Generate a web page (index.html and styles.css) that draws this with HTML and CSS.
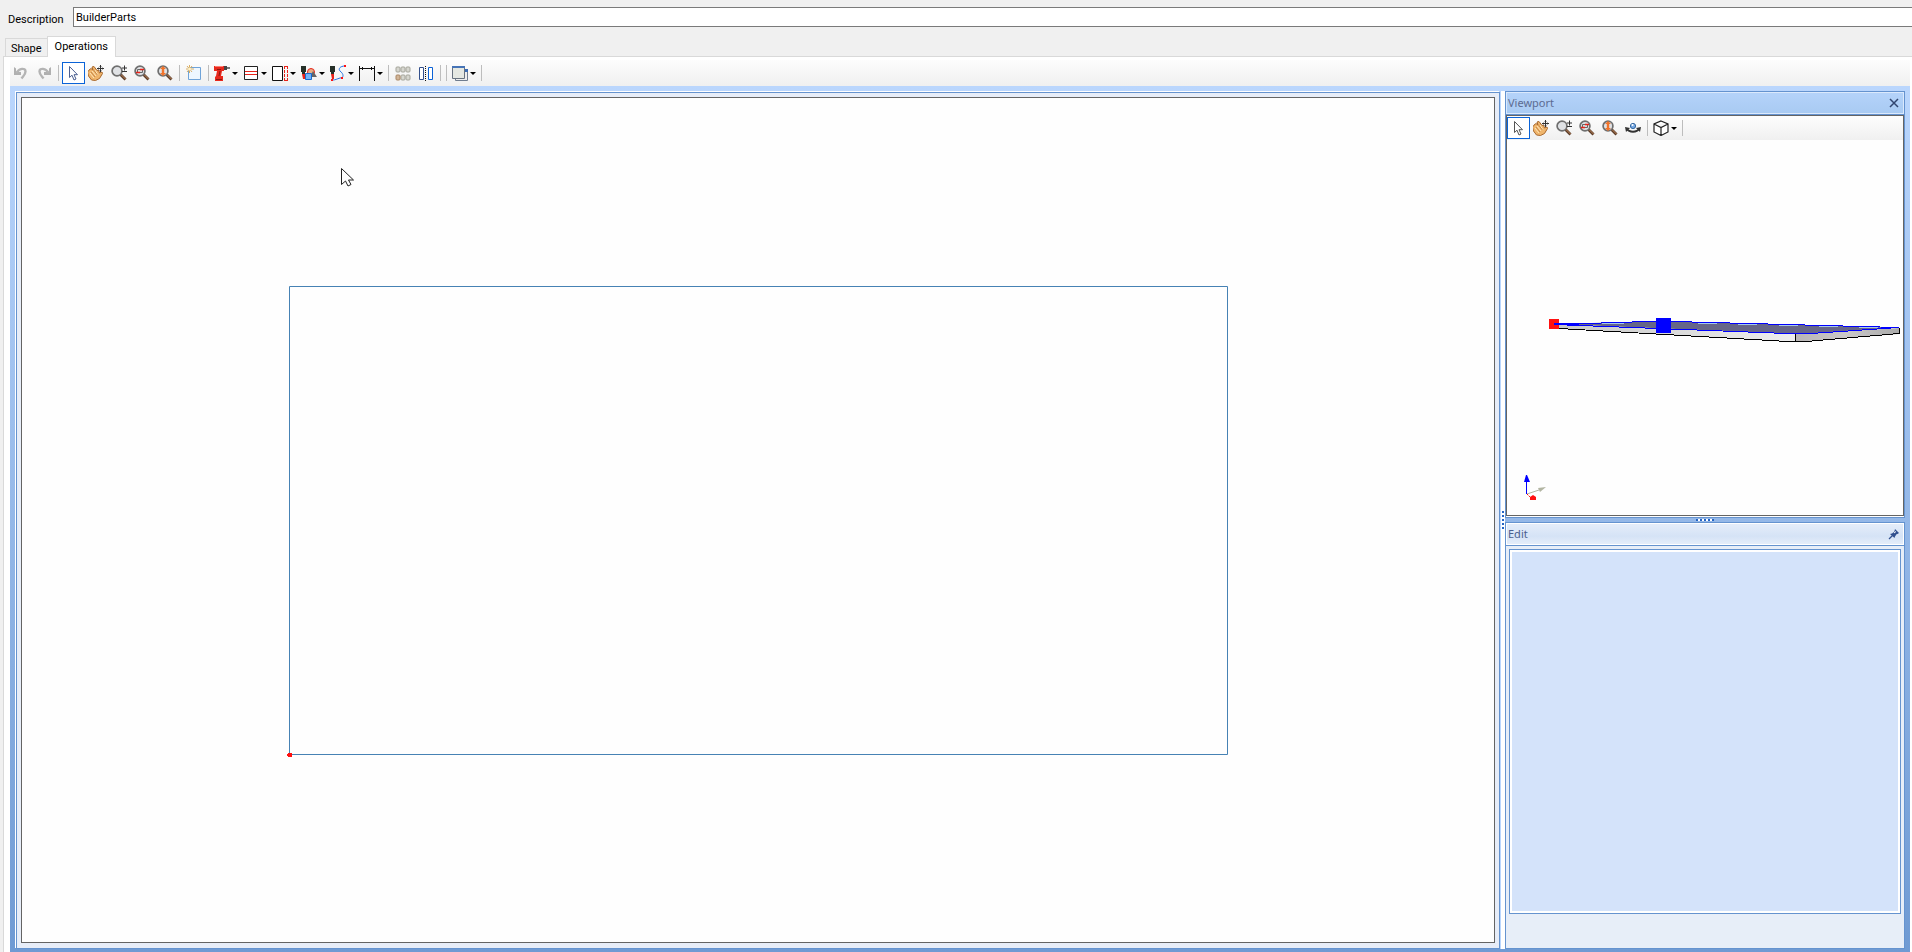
FILE: index.html
```html
<!DOCTYPE html>
<html lang="en">

<head>
    <meta charset="UTF-8">
    <meta name="viewport" content="width=device-width, initial-scale=1.0">
    <title>BuilderParts</title>
    <link rel="stylesheet" href="styles.css">
</head>

<body>
    <!-- shared icons -->
    <svg class="sprite" xmlns="http://www.w3.org/2000/svg">
        <symbol id="i-arrow" viewBox="0 0 16 16">
            <path d="M4.500 1.500v11l2.500-2.300 2 4.800 2-1-2-4.300h3.500z" fill="#fff" stroke="currentColor" />
        </symbol>
        <symbol id="i-hand" viewBox="0 0 16 16">
            <path d="M1 5l2-1.500 2 1.500-1-3 2-.5 3 4 1.500-.5 1 3 2.500-1 .5 1.500-3 5-4 2-4-.5-3-4-1-4 1-1z" fill="#efb56c" stroke="#a9682c" />
            <path d="M2 8l4 5M4 6l4 5M7 5l3 5" stroke="#ffe6b8" fill="none" />
            <path d="M3 7l4 5M5.500 5l4 5" stroke="#a9682c" stroke-width=".6" />
            <path d="M12.500 0v7M9 3.500h7" stroke="#333" />
            <path d="M11.500 1.500h2M11.500 5.500h2M10.500 2.500v2M14.500 2.500v2" stroke="#333" stroke-width=".7" />
        </symbol>
        <symbol id="i-glass" viewBox="0 0 16 16">
            <path d="M9.500 9.500l5 5" stroke="#5b3b27" stroke-width="2.800" />
            <path d="M10 9.500l4.500 4.500" stroke="#c08a60" />
            <circle cx="6" cy="6" r="4.900" fill="#e0e2e5" stroke="#6f6f6f" stroke-width="1.700" />
        </symbol>
        <symbol id="i-zoom" viewBox="0 0 16 16">
            <use href="#i-glass" />
            <path d="M11 3h5M13.500 .5v5M11 6.500h5" stroke="#333" />
        </symbol>
        <symbol id="i-zoomwin" viewBox="0 0 16 16">
            <use href="#i-glass" />
            <path d="M3.500 4.500h5v3h-5z" fill="#ddd" stroke="#666" />
            <path d="M6 4.500h4M2 7.500h4" stroke="#e8231a" stroke-width="1.500" />
        </symbol>
        <symbol id="i-zoomfit" viewBox="0 0 16 16">
            <use href="#i-glass" />
            <path d="M6 1l3 3H7.200v4H9l-3 3-3-3h1.800V4H3z" fill="#f2742b" />
        </symbol>
    </svg>

    <header class="description">
        <label for="desc">Description</label>
        <input id="desc" type="text" value="BuilderParts">
    </header>

    <nav class="tabs">
        <button>Shape</button>
        <button class="active">Operations</button>
    </nav>

    <main class="page">
        <div class="toolbar">
            <button class="tool" aria-label="Undo"><svg viewBox="0 0 16 16"><path d="M1 2l2 1.500v3L8 7v3H1z" fill="#b0b0b0" /><path d="M3.500 8C6 3 12.500 2.500 12.500 6.500c0 3-2 4.500-4 7" fill="none" stroke="#b4b4b4" stroke-width="2.400" /></svg></button>
            <button class="tool" aria-label="Redo"><svg viewBox="0 0 16 16"><path d="M15 2l-2 1.500v3L8 7v3h7z" fill="#b0b0b0" /><path d="M12.500 8C10 3 3.500 2.500 3.500 6.500c0 3 2 4.500 4 7" fill="none" stroke="#b4b4b4" stroke-width="2.400" /></svg></button>
            <span class="line"></span>
            <button class="tool active blue" aria-label="Select"><svg><use href="#i-arrow" /></svg></button>
            <button class="tool" aria-label="Pan"><svg><use href="#i-hand" /></svg></button>
            <button class="tool" aria-label="Zoom"><svg><use href="#i-zoom" /></svg></button>
            <button class="tool" aria-label="Zoom window"><svg><use href="#i-zoomwin" /></svg></button>
            <button class="tool" aria-label="Zoom to fit"><svg><use href="#i-zoomfit" /></svg></button>
            <span class="line"></span>
            <button class="tool" aria-label="New shape"><svg viewBox="0 0 16 16"><path d="M2.500 2.500h12v12h-12z" fill="#eef7ff" stroke="#6fa3d8" /><path d="M3.500 0v8M0 4h8M1 1l5 6M6 1L1 7" stroke="#dcae62" /><circle cx="3.500" cy="4" r="1.500" fill="#fff3c4" /></svg></button>
            <span class="line"></span>
            <button class="tool drop" aria-label="Drill"><svg viewBox="0 0 16 16"><path d="M0 1h10v5H8l-1 5h2v5H1v-4l1-1 1-5H0z" fill="#e8281c" /><path d="M1 1.500h8" stroke="#ff8174" /><path d="M10 1h3v4h-3z" fill="#454545" /><path d="M13 3h3" stroke="#777" stroke-width="2" /><path d="M6 6l-1 5M2 14.500h6M3 4.500h4" stroke="#8d160f" /></svg></button>
            <button class="tool drop" aria-label="Groove"><svg viewBox="0 0 16 16"><path d="M1.500 1.500h13v13h-13z" fill="#fff" stroke="#222" /><path d="M2 6.500h12M2 9.500h12" stroke="#e8231a" /></svg></button>
            <button class="tool drop" aria-label="Edge"><svg viewBox="0 0 16 16"><path d="M.5 1.500h10v14H.5z" fill="#fff" stroke="#111" /><path d="M12.500 1v15M15.500 1v15M12 1.500h4M12 15.500h4" stroke="#e8231a" stroke-dasharray="3 1" /></svg></button>
            <button class="tool drop" aria-label="Pocket"><svg viewBox="0 0 16 16"><path d="M0 1h5v6H4v2H1V7H0z" fill="#263028" /><path d="M1 9h3v5H2z" fill="#e8231a" /><circle cx="10" cy="7" r="3.500" fill="#e7b087" stroke="#e8231a" /><path d="M9 12l3-6 4 6z" fill="#666" /><path d="M4.500 8.500h6v6h-6z" fill="#75b3f5" stroke="#176bd0" /></svg></button>
            <button class="tool drop" aria-label="Path"><svg viewBox="0 0 16 16"><path d="M0 1h5v6H4v2H1V7H0z" fill="#263028" /><path d="M1 9h3v5H2z" fill="#e8231a" /><path d="M15 1c-5 0-7 3-5 5 4 3 4 7 0 7-3 1-5 2-7 2" fill="none" stroke="#2474e4" /><path d="M14 0h2v2h-2zM1 14h2v2H1zM11 12h2v2h-2z" fill="#f11" /></svg></button>
            <button class="tool drop" aria-label="Dimension"><svg viewBox="0 0 16 16"><path d="M.5 1v15M15.500 1v15M1 3.500h14M3.500 2v3M12.500 2v3" stroke="#111" /></svg></button>
            <span class="line"></span>
            <button class="tool" aria-label="Pattern"><svg viewBox="0 0 16 16"><g fill="#d6d6cf" stroke="#a5a59b"><rect x="1" y="2" width="4" height="5" rx="1" /><rect x="6" y="2" width="4" height="5" rx="1" /><rect x="11" y="2" width="4" height="5" rx="1" /><rect x="6" y="10" width="4" height="5" rx="1" /><rect x="11" y="10" width="4" height="5" rx="1" /><rect x="1" y="10" width="4" height="5" rx="1" fill="#d1b598" stroke="#aa8764" /></g></svg></button>
            <button class="tool" aria-label="Mirror"><svg viewBox="0 0 16 16"><path d="M1.500 2.500h4v12h-4z" fill="#fff" stroke="#34508c" /><path d="M10.500 2.500h4v12h-4z" fill="#fff" stroke="#0b62d6" /><path d="M7.500 1v15" stroke="#111" stroke-dasharray="1 1" /></svg></button>
            <span class="line"></span>
            <span class="line"></span>
            <button class="tool drop" aria-label="Windows"><svg viewBox="0 0 16 16"><path d="M3.500 4.500h12v11h-12z" fill="#eee" stroke="#6f7c8e" /><path d="M13 4h3v3h-3z" fill="#3b6cb5" /><path d="M.5 1.500h12v12H.5z" fill="#e5e8e2" stroke="#68727f" /><path d="M0 1h13v2H0z" fill="#4674b7" /></svg></button>
            <span class="line"></span>
        </div>

        <div class="dock">
            <section class="document">
                <div class="canvas">
                    <svg class="drawing" viewBox="0 0 1472 844">
                        <path d="M267.500 188.500h938v468h-938z" fill="none" stroke="#4682b4" />
                        <path d="M266 655h4v4h-4zM265 656h2v2h-2z" fill="#f11" />
                        <path d="M319.500 70.500v16l4-3.500 2.500 5 3-1.500-2.500-4.500h5z" fill="#fff" stroke="#222" />
                    </svg>
                </div>
            </section>

            <div class="splitter"><i class="grip"></i></div>

            <aside class="side">
                <section class="panel viewport">
                    <h2>Viewport
                        <button class="title-button" aria-label="Close"><svg viewBox="0 0 12 12"><path d="M2 2l8 8M10 2l-8 8" stroke="#31456f" stroke-width="1.500" /></svg></button>
                    </h2>
                    <div class="view">
                        <div class="toolbar">
                            <button class="tool active" aria-label="Select"><svg><use href="#i-arrow" /></svg></button>
                            <button class="tool" aria-label="Pan"><svg><use href="#i-hand" /></svg></button>
                            <button class="tool" aria-label="Zoom"><svg><use href="#i-zoom" /></svg></button>
                            <button class="tool" aria-label="Zoom window"><svg><use href="#i-zoomwin" /></svg></button>
                            <button class="tool" aria-label="Zoom to fit"><svg><use href="#i-zoomfit" /></svg></button>
                            <button class="tool" aria-label="Orbit"><svg viewBox="0 0 16 16"><path d="M2 9c2 3.500 10 3.500 12 0" fill="none" stroke="#333" stroke-width="2" /><path d="M0 7l5 1-4 4zM16 7l-5 1 4 4z" fill="#333" /><circle cx="8" cy="6" r="2.600" fill="#78a9e3" stroke="#31659f" /><circle cx="7.500" cy="5" r="1" fill="#fff" /></svg></button>
                            <span class="line"></span>
                            <button class="tool drop" aria-label="View direction"><svg viewBox="0 0 16 16"><path d="M8 1l7 3v8l-7 3.500L1 12V4zM1 4l7 3.500L15 4M8 7.500v8" fill="#fff" stroke="#222" stroke-width="1.200" /></svg></button>
                            <span class="line"></span>
                        </div>
                        <svg class="scene" viewBox="0 -1 396 375">
                            <defs>
                                <linearGradient id="front"><stop offset="0" stop-color="#c8c8c8" /><stop offset="1" stop-color="#eee" /></linearGradient>
                                <linearGradient id="end"><stop offset="0" stop-color="#b8b5b5" /><stop offset=".5" stop-color="#cac8c8" /><stop offset="1" stop-color="#aaa" /></linearGradient>
                            </defs>
                            <path d="M47 183l241 10v8L47 187z" fill="url(#front)" />
                            <path d="M288 193l104-6v6l-104 8z" fill="url(#end)" />
                            <path d="M47 183l94-2.500h25L391 186.500l-89 6h-22z" fill="#666688" />
                            <g fill="none" shape-rendering="crispEdges">
                                <path d="M95 182.500h22M191 182.500h19M231 183.500h19M272 184.500h19M312 185.500h19M352 186.500h19" stroke="#a6c8e8" />
                                <path d="M52 187.500l229 13h18l93-8v-6M288.500 193v8" stroke="#000" />
                                <path d="M47 183.500l94-3h25l226 6M47 183.500l233 9h24l88-6" stroke="#00f" />
                            </g>
                            <path d="M42 178h10v10H42z" fill="#f11" />
                            <path d="M47 183h25" stroke="#00f" stroke-width="2" />
                            <path d="M149 177h15v15h-15z" fill="#00f" />
                            <!-- axes -->
                            <path d="M20 353l12-4" stroke="#b2b5a2" />
                            <path d="M31 347l8-1-6 5z" fill="#b2b5a2" />
                            <path d="M19.500 353v-13" stroke="#00f" />
                            <path d="M19 334h1l3 7h-6z" fill="#00f" />
                            <path d="M20 353l4 4" stroke="#f11" stroke-dasharray="2 1" />
                            <path d="M23 356l3-2 3 2v3h-6z" fill="#f11" />
                        </svg>
                    </div>
                </section>

                <div class="splitter row"><i class="grip"></i></div>

                <section class="panel edit">
                    <h2>Edit
                        <button class="title-button" aria-label="Auto hide"><svg viewBox="0 0 12 12"><path d="M7 1l4 4-1.500 1-1 .3L7 8.500 6.500 10 2 6l2-.5 2.300-1.800z" fill="#31508f" /><path d="M4.500 7.500L1 11" stroke="#31508f" stroke-width="1.300" /><path d="M6 5l2-1.500" stroke="#fff" /></svg></button>
                    </h2>
                    <div class="edit-body"></div>
                </section>
            </aside>
        </div>
    </main>
</body>

</html>
```
FILE: styles.css
```css
* {
    margin: 0;
    padding: 0;
    box-sizing: border-box;
}

body {
    height: 100vh;
    display: flex;
    flex-direction: column;
    overflow: hidden;
    background-color: #f0f0f0;
    color: #000;
    font-family: "Roboto", "Liberation Sans", sans-serif;
    font-size: 11px;
}

button {
    border: none;
    background: none;
    font: inherit;
}

.sprite {
    display: none;
}

.description {
    display: flex;
    align-items: flex-start;
    gap: 8px;
    height: 36px;
    padding: 7px 0 0 8px;
}

.description label {
    width: 57px;
    line-height: 26px;
}

.description input {
    flex: 1;
    height: 20px;
    padding: 0 2px;
    border: 1px solid #7a7a7a;
    border-right: none;
    background-color: #fff;
    font: inherit;
}

/* tabs */
.tabs {
    display: flex;
    align-items: flex-end;
    height: 20px;
    padding-left: 5px;
}

.tabs button {
    height: 18px;
    padding: 1px 5px 0;
    border: 1px solid #d9d9d9;
    border-width: 1px 0 0 1px;
}

.tabs .active {
    height: 21px;
    margin-bottom: -1px;
    padding: 0 7px 2px;
    border-width: 1px 1px 0;
    background-color: #fff;
    z-index: 1;
}

.page {
    flex: 1;
    min-height: 0;
    display: flex;
    flex-direction: column;
    margin-left: 3px;
    padding: 3px 2px 0 6px;
    border: 1px solid #d9d9d9;
    border-width: 1px 0 0 1px;
    background-color: #fff;
}

/* toolbars */
.toolbar {
    display: flex;
    align-items: center;
    height: 26px;
    background-image: linear-gradient(#fdfdfd, #f0f0f0);
}

.tool {
    display: flex;
    align-items: center;
    justify-content: center;
    width: 23px;
    height: 22px;
    padding-right: 1px;
}

.tool svg {
    width: 16px;
    height: 16px;
}

.tool.active {
    border: 1px solid #0a63d8;
    background-color: #fff;
    color: #555;
}

.tool.blue {
    color: #4b5f91;
}

.drop {
    width: 29px;
    gap: 2px;
}

.drop::after {
    content: "";
    border: 3px solid transparent;
    border-top-color: #000;
    border-bottom: none;
}

.line {
    width: 1px;
    height: 16px;
    margin: 0 3px 0 2px;
    background-color: #bdbdbd;
}

/* docking area */
.dock {
    flex: 1;
    min-height: 0;
    display: flex;
    padding: 5px 5px 3px 6px;
    background-image: linear-gradient(#bad6fd, #6f9ad3);
}

.document {
    flex: 1;
    display: flex;
    margin-top: 1px;
    padding: 4px 4px 5px;
    border: 1px solid #6593cf;
    box-shadow: -1px -1px 0 #fff;
    background-color: #e7edf8;
}

.canvas {
    flex: 1;
    min-height: 0;
    border: 1px solid #646464;
    background-color: #fefefe;
}

.drawing,
.scene {
    display: block;
    width: 100%;
    height: 100%;
}

.splitter {
    width: 5px;
    display: flex;
    align-items: center;
    justify-content: center;
    border-left: 1px solid #bad6fd;
    background-color: #fff;
}

.grip {
    width: 2px;
    height: 18px;
    background-image: repeating-linear-gradient(#2464c4 0 2px, transparent 2px 4px);
}

.row {
    width: auto;
    height: 4px;
    border: none;
    background: none;
}

.row .grip {
    width: 18px;
    height: 2px;
    background-image: repeating-linear-gradient(90deg, #2464c4 0 2px, #fff 2px 4px);
}

.side {
    width: 400px;
    display: flex;
    flex-direction: column;
}

.panel {
    flex: 1 1 0;
    min-height: 0;
    display: flex;
    flex-direction: column;
    border: 1px solid #6593cf;
    background-color: #fff;
}

.panel h2 {
    display: flex;
    align-items: center;
    justify-content: space-between;
    height: 23px;
    padding: 0 4px 1px 2px;
    border-bottom: 1px solid #6593cf;
    color: #5c6b91;
    font-family: "Noto Sans", sans-serif;
    font-size: 11px;
    font-weight: 400;
    background-image: linear-gradient(#b5d3fa, #a8caf2);
    box-shadow: inset 0 0 0 1px #dbe9fc;
}

.title-button svg {
    display: block;
    width: 12px;
    height: 12px;
}

.view {
    flex: 1;
    min-height: 0;
    display: flex;
    flex-direction: column;
    margin-bottom: 1px;
    border: 1px solid #646464;
    background-color: #fefefe;
}

.view .toolbar {
    height: 24px;
}

.scene {
    flex: 1;
    min-height: 0;
}

.edit {
    background-color: #e7eef8;
}

.panel.edit h2 {
    color: #4a5f8f;
    background-image: linear-gradient(#e6eefa, #d5e3f6 60%, #e6eefa);
    box-shadow: inset 0 0 0 1px #fff;
}

.edit-body {
    flex: 1;
    margin: 3px 3px 34px;
    border: 1px solid #6593cf;
    box-shadow: inset 0 0 0 2px #fff;
    background-color: #d4e3fa;
}
```
